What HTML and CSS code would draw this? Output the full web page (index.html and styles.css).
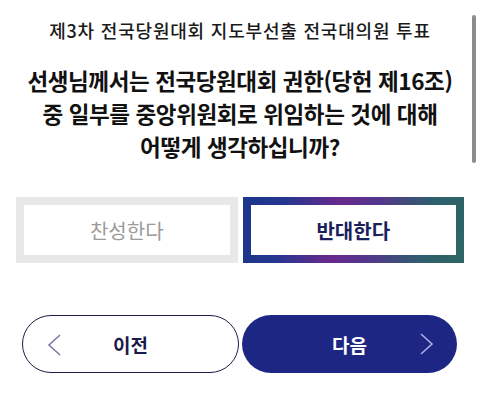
FILE: index.html
```html
<!DOCTYPE html>
<html lang="ko">
<head>
<meta charset="utf-8">
<link rel="stylesheet" href="styles.css">
</head>
<body>
<div class="page">
  <div class="scrollbar"></div>
  <p class="subtitle">제3차 전국당원대회 지도부선출 전국대의원 투표</p>
  <h1 class="question">선생님께서는 전국당원대회 권한(당헌 제16조)<br>중 일부를 중앙위원회로 위임하는 것에 대해<br>어떻게 생각하십니까?</h1>
  <div class="choices">
    <button class="choice choice-off">찬성한다</button>
    <button class="choice choice-on">반대한다</button>
  </div>
  <div class="nav">
    <button class="pill pill-prev">
      <svg class="chev chev-left" viewBox="0 0 14 22" width="14" height="22"><path d="M13 1 L2 11 L13 21" fill="none" stroke="#7b7ba8" stroke-width="1.6"/></svg>
      <span>이전</span>
    </button>
    <button class="pill pill-next">
      <span>다음</span>
      <svg class="chev chev-right" viewBox="0 0 14 22" width="14" height="22"><path d="M1 1 L12 11 L1 21" fill="none" stroke="#aeb0e6" stroke-width="1.6"/></svg>
    </button>
  </div>
</div>
</body>
</html>
```
FILE: styles.css
```css
* { box-sizing: border-box; }
html, body { margin: 0; padding: 0; background: #fff; }
body { font-family: "Noto Sans CJK KR", "Noto Sans", sans-serif; color: #111; }
.page {
  position: relative;
  width: 480px;
  height: 402px;
  padding-top: 19px;
}
.scrollbar {
  position: absolute;
  left: 472px;
  top: 15px;
  width: 4px;
  height: 148px;
  border-radius: 2px;
  background: #8c8c8c;
}
.subtitle {
  margin: 0;
  text-align: center;
  font-size: 18px;
  line-height: 22px;
  font-weight: 500;
  color: #1a1a1a;
  letter-spacing: 0.8px;
}
.question {
  margin: 23px 0 0;
  text-align: center;
  font-size: 22.5px;
  line-height: 33px;
  font-weight: 700;
  color: #111;
  letter-spacing: -0.4px;
}
.choices {
  display: flex;
  gap: 5px;
  padding: 0 16px;
  margin-top: 34px;
}
.choice {
  flex: 1;
  height: 66px;
  border: 8px solid #e8e8e8;
  background: #fff;
  font-family: inherit;
  font-size: 20px;
  padding: 0;
  cursor: pointer;
}
.choice-off { color: #9b9b9b; font-weight: 400; }
.choice-on {
  color: #1b1f5c;
  font-weight: 700;
  border-color: transparent;
  background:
    linear-gradient(#fff, #fff) padding-box,
    linear-gradient(100deg, #1d358c 0%, #24378e 18%, #67298d 42%, #54368c 58%, #2f5f6c 82%, #2d6565 100%) border-box;
}
.nav {
  display: flex;
  gap: 3px;
  padding: 0 23px 0 22px;
  margin-top: 52px;
}
.pill {
  flex: 1;
  height: 58px;
  border-radius: 29px;
  font-family: inherit;
  font-size: 19px;
  font-weight: 700;
  padding: 0;
  position: relative;
  display: flex;
  align-items: center;
  justify-content: center;
  cursor: pointer;
}
.pill-prev {
  background: #fff;
  border: 1.5px solid #1c1c45;
  color: #1a1a4c;
}
.pill-next {
  background: #1e2684;
  border: none;
  color: #fff;
}
.chev { position: absolute; top: 18px; }
.chev-left { left: 24px; }
.chev-right { right: 23px; }
```
